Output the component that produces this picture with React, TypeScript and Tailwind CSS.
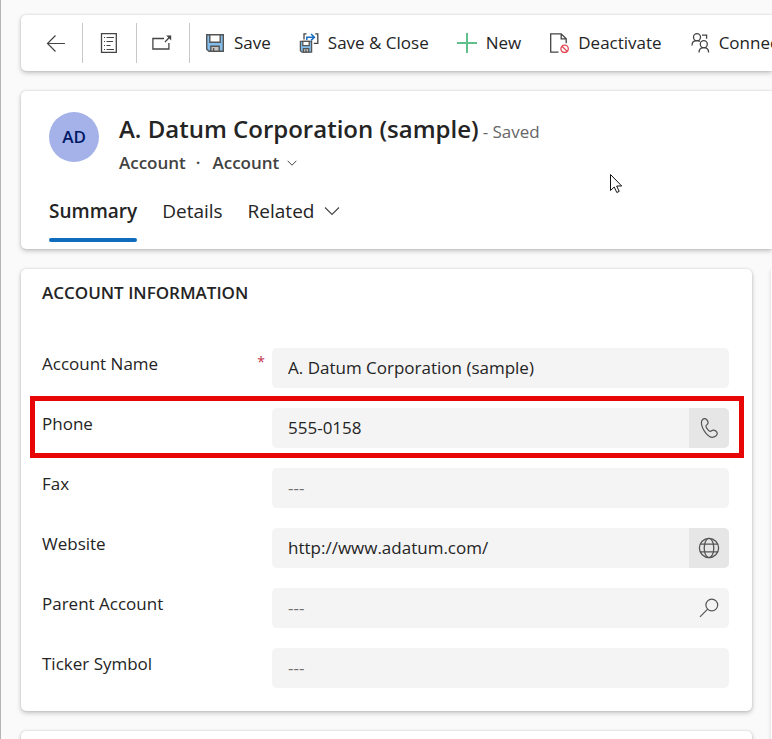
import type { ReactNode } from "react";

const card = "bg-white shadow-[0_0_2px_rgba(0,0,0,0.16),0_2px_5px_rgba(0,0,0,0.22)]";

function BackIcon() {
  return (
    <svg width="20" height="20" viewBox="0 0 20 20" fill="none" stroke="#444" strokeWidth="1.2">
      <path d="M19 10.500H1.500M9.500 2.500L1.500 10.500l8 8" />
    </svg>
  );
}

function FormIcon() {
  return (
    <svg width="20" height="20" viewBox="0 0 20 20" fill="none" stroke="#444" strokeWidth="1.3">
      <path d="M2.5.6h14.8v18.800H2.500z" />
      <path d="M5 4.500h1M7.500 4.500h7.500M5 8.500h1M7.500 8.500H14M5 12.500h1M7.500 12.500h4M5 16.500h1M7.500 16.500H15" strokeWidth="1" />
    </svg>
  );
}

function PopOutIcon() {
  return (
    <svg width="20" height="20" viewBox="0 0 20 20" fill="none" stroke="#444" strokeWidth="1.3">
      <path d="M12 5.500H.9v10.500h16V10" />
      <path d="M13 9l5.600-6" />
      <path d="M14.200 2.500h5v5z" fill="#444" stroke="none" />
    </svg>
  );
}

function SaveIcon() {
  return (
    <svg width="20" height="20" viewBox="0 0 20 20" stroke="#555" strokeWidth="1.4">
      <path d="M1.700 1.700h16.600v16.600H4L1.700 16.200z" fill="#83beec" />
      <path d="M4.800 1.700h10.400v7.600H4.800z" fill="#fff" />
      <path d="M5.800 13.200h8.400v5.100H5.800z" fill="#c8c6c4" />
      <path d="M8.600 15v3.300" />
    </svg>
  );
}

function SaveCloseIcon() {
  return (
    <svg width="20" height="20" viewBox="0 0 20 20" fill="none" stroke="#555" strokeWidth="1.3">
      <path d="M1.400 8.400h11.200v10.800H3L1.400 17.800z" fill="#83beec" />
      <path d="M3.800 8.400h6.400v4.200H3.800z" fill="#fff" />
      <path d="M4.400 15.600h5.400v3.600H4.400z" fill="#c8c6c4" />
      <path d="M7 16.500v2.700" />
      <path d="M7.500.8H5v5.600M16.200.8h2.600v9.600h-4" stroke="#444" />
      <path d="M7.800 7V4.200h7M12 1l3.400 3.200L12 7.400" stroke="#1a6dbf" strokeWidth="1.5" />
    </svg>
  );
}

function PlusIcon() {
  return (
    <svg width="20" height="20" viewBox="0 0 20 20" fill="none" stroke="#5fc189" strokeWidth="2">
      <path d="M10 0v20M0 10h20" />
    </svg>
  );
}

function DeactivateIcon() {
  return (
    <svg width="20" height="20" viewBox="0 0 20 20" fill="none" stroke="#444" strokeWidth="1.3">
      <path d="M9.500 19.200H1.700V.8h10.500l5 5v4.400M12.200.8v5h5" />
      <circle cx="15.600" cy="15.800" r="3.700" stroke="#e0444e" />
      <path d="M13 13.200l5.200 5.200" stroke="#e0444e" />
    </svg>
  );
}

function ConnectIcon() {
  return (
    <svg width="20" height="20" viewBox="0 0 20 20" fill="none" stroke="#444" strokeWidth="1.3">
      <circle cx="7" cy="4.200" r="3.500" />
      <path d="M2 12.400c0-2.900 2-4.700 5-4.700 1.200 0 2.200.3 3 .9" />
      <circle cx="13.800" cy="11.200" r="3.500" />
      <path d="M9 19.600c0-3 1.800-4.900 4.800-4.900s4.800 1.900 4.800 4.900" />
      <path d="M12 2.200h4.600v3.600M8.600 17.200" />
    </svg>
  );
}

function Chevron({ size }: { size: number }) {
  return (
    <svg width={size} height={size} viewBox="0 0 16 16" fill="none" stroke="#444" strokeWidth={size > 12 ? 1.1 : 1.6}>
      <path d="M1 4.500l7 7 7-7" />
    </svg>
  );
}

function PhoneIcon() {
  return (
    <svg width="20" height="20" viewBox="0 0 20 20" fill="none" stroke="#555" strokeWidth="1.2" strokeLinejoin="round">
      <path d="M3.6 1.5C4.8.5 6.5.3 7.6 1.5c1 1.1 1.6 2.6 1.4 3.7-.2 1.3-1.8 1.6-2 2.8-.2 1.4 2.6 5.1 4.2 5.3 1.1.1 1.7-1.1 2.9-1.2 1.400-.1 3 .9 3.700 2 .8 1.300.2 2.900-1 3.900-3 2.300-6.800 1-9.800-2.600C4.200 11.900 2.500 8.100 2.400 4.800c0-1.400.3-2.500 1.200-3.300z" />
    </svg>
  );
}

function GlobeIcon() {
  return (
    <svg width="22" height="22" viewBox="0 0 22 22" fill="none" stroke="#555" strokeWidth="1.3">
      <circle cx="11" cy="11" r="9.600" />
      <ellipse cx="11" cy="11" rx="4.800" ry="9.600" />
      <path d="M2.200 7.200h17.600M2.200 14.800h17.600" />
    </svg>
  );
}

function SearchIcon() {
  return (
    <svg width="20" height="20" viewBox="0 0 20 20" fill="none" stroke="#555" strokeWidth="1.200">
      <circle cx="12.800" cy="7" r="5.900" />
      <path d="M8.600 11.200L1 18.800" />
    </svg>
  );
}

function Command({ icon, label }: { icon: ReactNode; label: string }) {
  return (
    <button type="button" className="flex shrink-0 items-center gap-[9px] whitespace-nowrap">
      {icon}
      <span>{label}</span>
    </button>
  );
}

function CommandBar() {
  return (
    <nav aria-label="Commands" className={`${card} flex h-14 items-center overflow-hidden rounded-l-[5px] leading-6`}>
      <button type="button" aria-label="Back" className="flex h-10 w-[62px] shrink-0 items-center justify-center border-r border-[#c8c8c8] pl-2">
        <BackIcon />
      </button>
      <button type="button" aria-label="Open form" className="flex h-10 w-[54px] shrink-0 items-center justify-center border-r border-[#c8c8c8] pr-0.5">
        <FormIcon />
      </button>
      <button type="button" aria-label="Open in new window" className="flex h-10 w-[53px] shrink-0 items-center justify-center border-r border-[#c8c8c8] pr-0.5">
        <PopOutIcon />
      </button>
      <div className="flex items-center gap-7 pl-[15px]">
        <Command icon={<SaveIcon />} label="Save" />
        <Command icon={<SaveCloseIcon />} label="Save & Close" />
        <Command icon={<PlusIcon />} label="New" />
        <Command icon={<DeactivateIcon />} label="Deactivate" />
        <Command icon={<ConnectIcon />} label="Connect" />
      </div>
    </nav>
  );
}

function RecordHeader() {
  return (
    <header className={`${card} mt-5 rounded-l-[5px] px-7 pt-5 pb-[7px]`}>
      <div className="flex gap-5">
        <div className="mt-px flex size-[50px] shrink-0 items-center justify-center rounded-full bg-[#a4b2e9] font-semibold text-[#001966]">
          AD
        </div>
        <div>
          <div className="flex items-baseline gap-1">
            <h1 className="text-2xl leading-9 font-semibold">A. Datum Corporation (sample)</h1>
            <span className="text-[#666]">- Saved</span>
          </div>
          <div className="flex items-center gap-2.5 leading-8 font-semibold text-[#424242]">
            <span>Account</span>
            <span>·</span>
            <button type="button" className="flex items-center gap-2 pl-0.5">
              Account
              <Chevron size={10} />
            </button>
          </div>
        </div>
      </div>
      <div role="tablist" className="mt-3 flex gap-[25px] text-[19px]">
        <button type="button" role="tab" aria-selected="true" className="flex flex-col font-semibold">
          <span className="leading-10">Summary</span>
          <span className="mt-[7px] h-1 w-full rounded-full bg-[#0f6cbd]" />
        </button>
        <button type="button" role="tab" aria-selected="false" className="h-10">
          Details
        </button>
        <button type="button" role="tab" aria-selected="false" className="flex h-10 items-center gap-2.5">
          Related
          <Chevron size={16} />
        </button>
      </div>
    </header>
  );
}

type FieldProps = {
  id: string;
  label: string;
  value?: string;
  required?: boolean;
  highlighted?: boolean;
  action?: { label: string; icon: ReactNode; filled: boolean };
};

function Field({ id, label, value, required, highlighted, action }: FieldProps) {
  return (
    <div className="relative flex">
      <label htmlFor={id} className="flex w-[230px] shrink-0 justify-between pt-1 pr-[7px] leading-6">
        {label}
        {required && <span className="text-sm text-[#c4314b]">*</span>}
      </label>
      <div className="flex h-10 min-w-0 flex-1 overflow-hidden rounded-[5px] bg-[#f4f4f4]">
        <input
          id={id}
          defaultValue={value}
          placeholder="---"
          required={required}
          className="min-w-0 flex-1 bg-transparent px-4 outline-none placeholder:text-[#707070]"
        />
        {action && (
          <button
            type="button"
            aria-label={action.label}
            className={`flex w-10 items-center justify-center ${action.filled ? "bg-[#e6e6e6]" : ""}`}
          >
            {action.icon}
          </button>
        )}
      </div>
      {highlighted && (
        <div className="pointer-events-none absolute -top-3 -right-[15px] -bottom-2.5 -left-3 border-5 border-[#e80505]" />
      )}
    </div>
  );
}

const fields: FieldProps[] = [
  { id: "name", label: "Account Name", value: "A. Datum Corporation (sample)", required: true },
  { id: "phone", label: "Phone", value: "555-0158", highlighted: true, action: { label: "Call", icon: <PhoneIcon />, filled: true } },
  { id: "fax", label: "Fax" },
  { id: "website", label: "Website", value: "http://www.adatum.com/", action: { label: "Open website", icon: <GlobeIcon />, filled: true } },
  { id: "parent", label: "Parent Account", action: { label: "Look up account", icon: <SearchIcon />, filled: false } },
  { id: "ticker", label: "Ticker Symbol" },
];

function Pointer() {
  return (
    <svg className="pointer-events-none absolute top-[173px] left-[608px]" width="14" height="21" viewBox="0 0 14 21" fill="#fff" stroke="#111" strokeWidth="1">
      <path d="M1.500 1.500v16l3.700-3.500 2.600 5.500 2.400-1.100-2.500-5.400h5z" />
    </svg>
  );
}

export default function App() {
  return (
    <div className="relative h-screen overflow-hidden border-l border-[#b5b5b5] bg-[#fafafa] pt-[15px] pl-5 font-['Open_Sans','Noto_Sans',sans-serif] text-[17px] text-[#242424]">
      <CommandBar />
      <RecordHeader />
      <main className="mt-5 flex gap-[19px]">
        <div className="flex min-w-0 flex-1 flex-col gap-5">
          <section className={`${card} rounded-[5px] pt-3 pr-[23px] pb-[23px] pl-[21px]`}>
            <h2 className="leading-6 font-semibold">ACCOUNT INFORMATION</h2>
            <div className="mt-[43px] flex flex-col gap-5">
              {fields.map((field) => (
                <Field key={field.id} {...field} />
              ))}
            </div>
          </section>
          <section className={`${card} h-20 rounded-[5px]`} />
        </div>
        <section className={`${card} w-px shrink-0`} />
      </main>
      <Pointer />
    </div>
  );
}
